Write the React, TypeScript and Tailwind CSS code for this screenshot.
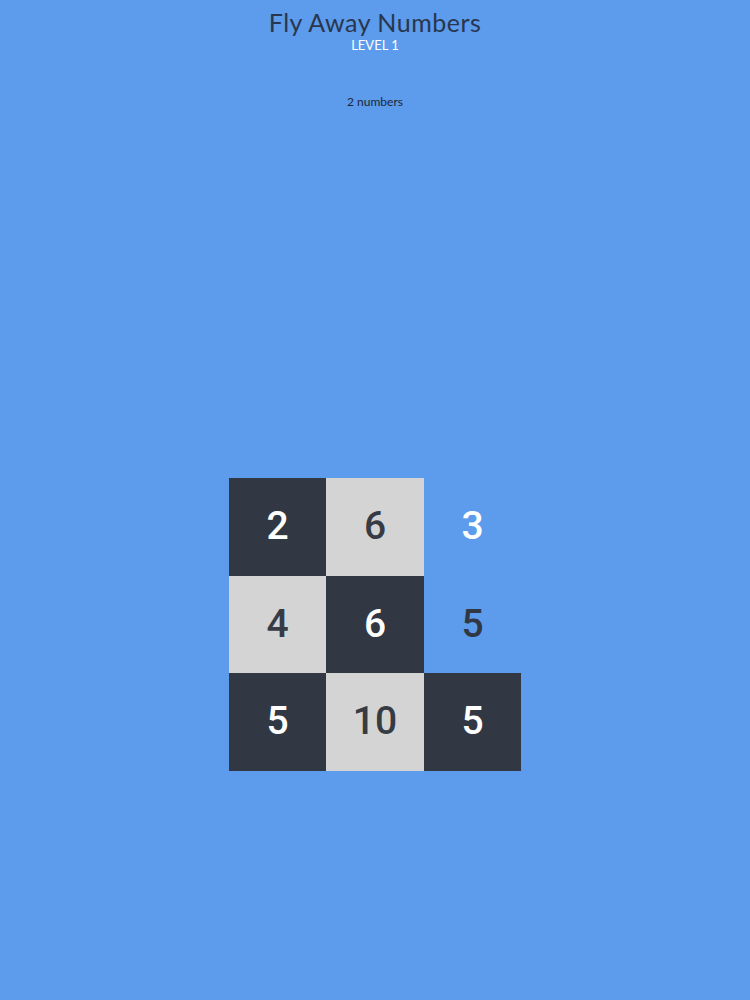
import React from 'react';

type Cell = { value: number | null; tone: 'dark' | 'light' | 'open'; ink?: 'white' | 'dark' };

const board: Cell[][] = [
    [
        { value: 2, tone: 'dark' },
        { value: 6, tone: 'light' },
        { value: 3, tone: 'open', ink: 'white' },
    ],
    [
        { value: 4, tone: 'light' },
        { value: 6, tone: 'dark' },
        { value: 5, tone: 'open', ink: 'dark' },
    ],
    [
        { value: 5, tone: 'dark' },
        { value: 10, tone: 'light' },
        { value: 5, tone: 'dark' },
    ],
];

function Tile({ cell }: { cell: Cell }) {
    let classes = 'flex items-center justify-center w-[97.5px] h-[97.5px] text-[39px] font-medium leading-none';
    if (cell.tone === 'dark') {
        classes += ' bg-[#313843] text-white';
    } else if (cell.tone === 'light') {
        classes += ' bg-[#d4d4d5] text-[#363b44]';
    } else if (cell.ink === 'white') {
        classes += ' text-white';
    } else {
        classes += ' text-[#313843]';
    }
    return (
        <div className={classes} style={{ fontFamily: '"Roboto", "DejaVu Sans Condensed", sans-serif' }}>
            {cell.value}
        </div>
    );
}

function App() {
    return (
        <div className="min-h-[1000px] w-full bg-[#5d9bec] flex flex-col items-center">
            <h1 className="mt-[6px] text-[25px] leading-[32px] text-[#28374d] tracking-[0.5px] font-['Lato',sans-serif]">
                Fly Away Numbers
            </h1>
            <div className="-mt-[1px] text-[13px] leading-[16px] text-white font-['Lato',sans-serif]">
                LEVEL 1
            </div>
            <div className="mt-[41px] text-[12px] leading-[15px] text-[#1c2638] font-['Lato',sans-serif]">
                2 numbers
            </div>
            <div className="mt-[369px] flex flex-col">
                {board.map((row, r) => (
                    <div key={r} className="flex">
                        {row.map((cell, c) => (
                            <Tile key={c} cell={cell} />
                        ))}
                    </div>
                ))}
            </div>
        </div>
    );
}

export default App;
